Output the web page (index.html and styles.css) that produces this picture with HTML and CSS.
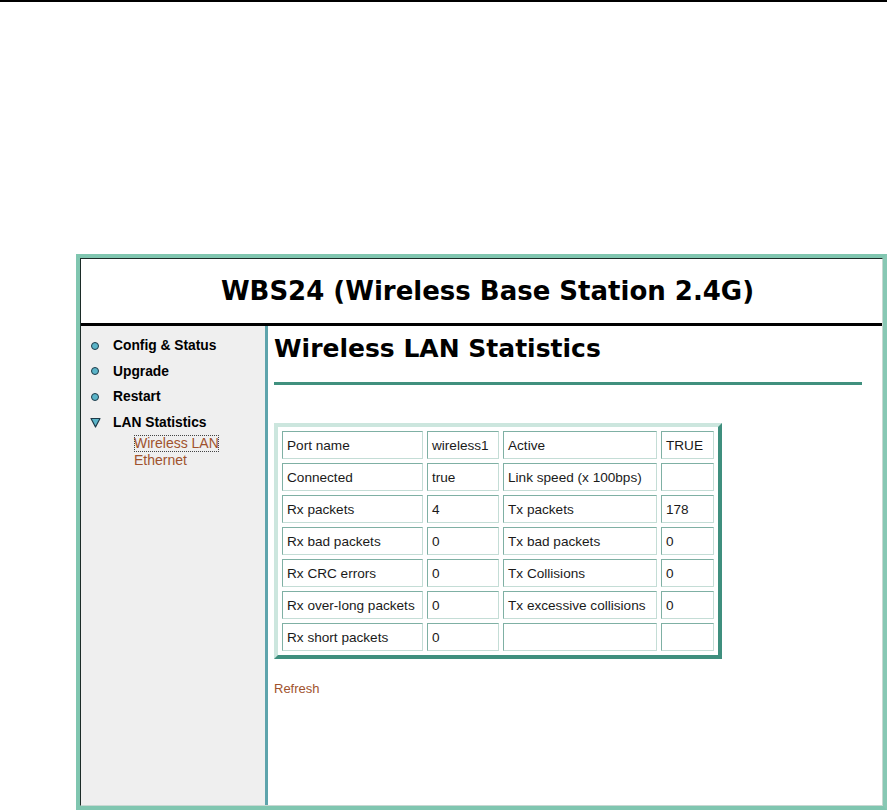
FILE: index.html
```html
<!DOCTYPE html>
<html>
<head>
<meta charset="utf-8">
<link rel="stylesheet" href="styles.css">
</head>
<body>
<div class="topline"></div>
<div class="frame">
  <div class="inner">
    <header class="banner"><h1>WBS24 (Wireless Base Station 2.4G)</h1></header>
    <div class="body">
      <nav class="side">
        <ul class="menu">
          <li class="item"><span class="dot"></span><span class="label">Config &amp; Status</span></li>
          <li class="item"><span class="dot"></span><span class="label">Upgrade</span></li>
          <li class="item"><span class="dot"></span><span class="label">Restart</span></li>
          <li class="item"><svg class="tri" width="11" height="11" viewBox="0 0 11 11"><path d="M1 1.5 L10 1.5 L5.5 10 Z" fill="#5ab4c8" stroke="#1e3a48" stroke-width="1.2" stroke-linejoin="round"/></svg><span class="label">LAN Statistics</span></li>
        </ul>
        <div class="sub">
          <a class="sublink focus">Wireless LAN</a>
          <a class="sublink">Ethernet</a>
        </div>
      </nav>
      <main class="content">
        <h2 class="title">Wireless LAN Statistics</h2>
        <div class="rule"></div>
        <table class="stats">
          <tr><td class="c1">Port name</td><td class="c2">wireless1</td><td class="c3">Active</td><td class="c4">TRUE</td></tr>
          <tr><td>Connected</td><td>true</td><td>Link speed (x 100bps)</td><td></td></tr>
          <tr><td>Rx packets</td><td>4</td><td>Tx packets</td><td>178</td></tr>
          <tr><td>Rx bad packets</td><td>0</td><td>Tx bad packets</td><td>0</td></tr>
          <tr><td>Rx CRC errors</td><td>0</td><td>Tx Collisions</td><td>0</td></tr>
          <tr><td>Rx over-long packets</td><td>0</td><td>Tx excessive collisions</td><td>0</td></tr>
          <tr><td>Rx short packets</td><td>0</td><td></td><td></td></tr>
        </table>
        <a class="refresh">Refresh</a>
      </main>
    </div>
  </div>
</div>
</body>
</html>
```
FILE: styles.css
```css
html, body {
  margin: 0;
  padding: 0;
  background: #ffffff;
}
body {
  width: 887px;
  height: 810px;
  overflow: hidden;
  font-family: "Liberation Sans", Arial, sans-serif;
}
.topline {
  height: 2px;
  background: #000;
}
.frame {
  margin-top: 252px;
  margin-left: 76px;
  width: 811px;
  height: 556px;
  box-sizing: border-box;
  border: 4px solid #80c6b0;
  border-right-color: #88c8b4;
}
.inner {
  height: 100%;
  box-sizing: border-box;
  border-top: 1px solid #1c2c28;
  border-left: 1px solid #1c2c28;
  border-right: 1px solid #c8d8d2;
  border-bottom: 1px solid #c8d8d2;
  display: flex;
  flex-direction: column;
}
.banner {
  height: 64px;
  border-bottom: 3px solid #000;
  display: flex;
  align-items: center;
  justify-content: center;
  background: #fff;
}
.banner h1 {
  margin: 0;
  font-family: "DejaVu Sans", Verdana, sans-serif;
  font-weight: bold;
  font-size: 26px;
  color: #000;
  padding-left: 12px;
}
.body {
  flex: 1;
  display: flex;
}
.side {
  width: 184px;
  background: #efefef;
  border-right: 3px solid #5ea4ac;
  padding-top: 7px;
}
.menu {
  list-style: none;
  margin: 0;
  padding: 0 0 0 10px;
}
.item {
  display: flex;
  align-items: center;
  height: 25.5px;
}
.dot {
  width: 6px;
  height: 6px;
  border-radius: 50%;
  background: #5ab4c8;
  border: 1px solid #1e3a48;
  margin: 0 14px 0 0;
}
.tri {
  margin-left: -1px;
  margin-right: 12px;
}
.label {
  font-weight: bold;
  font-size: 13.8px;
  color: #000;
}
.sub {
  padding-left: 53px;
  margin-top: 0;
  display: flex;
  flex-direction: column;
  align-items: flex-start;
}
.sublink {
  font-size: 14px;
  line-height: 17px;
  color: #a0522d;
}
.focus {
  outline: 1px dotted #444;
  outline-offset: -1px;
}
.content {
  flex: 1;
  background: #fff;
  padding: 0 20px 0 6px;
}
.title {
  margin: 8px 0 0 0;
  font-family: "DejaVu Sans", Verdana, sans-serif;
  font-weight: bold;
  font-size: 25px;
  line-height: 30px;
  color: #000;
}
.rule {
  height: 3px;
  background: #40907e;
  margin-top: 18px;
}
.stats {
  margin-top: 38px;
  border-collapse: separate;
  border-spacing: 4px;
  border-style: solid;
  border-width: 4px;
  border-color: #cce6de #3f8f7e #3f8f7e #cce6de;
  font-size: 13.6px;
}
.stats td {
  height: 26px;
  padding: 0 0 0 4px;
  border-style: solid;
  border-width: 1px;
  border-color: #7fb0a4 #c4ddd6 #c4ddd6 #7fb0a4;
  color: #1a1a1a;
  white-space: nowrap;
  vertical-align: middle;
}
.stats td.c1 { width: 135px; }
.stats td.c2 { width: 66px; }
.stats td.c3 { width: 148px; }
.stats td.c4 { width: 47px; }
.refresh {
  display: inline-block;
  margin-top: 22px;
  font-size: 13px;
  color: #a0522d;
}
```
